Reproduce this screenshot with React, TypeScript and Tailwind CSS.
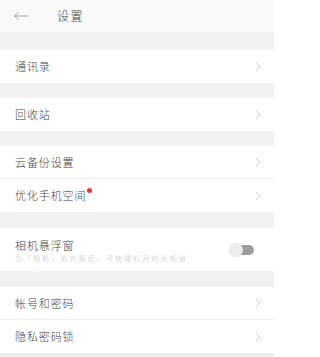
import React from "react";

const font = { fontFamily: '"Noto Sans CJK SC", "Noto Sans", sans-serif' };

function Chevron() {
  return (
    <svg width="6" height="10" viewBox="0 0 6 10" className="shrink-0">
      <path d="M1 1 L5 5 L1 9" fill="none" stroke="#c8c8c8" strokeWidth="0.9" />
    </svg>
  );
}

function Row({ label, dot, border }: { label: string; dot?: boolean; border?: boolean }) {
  return (
    <div className={`flex h-[33px] items-center justify-between bg-white pl-[15px] pr-[13px] ${border ? "border-b border-[#ededed]" : ""}`}>
      <div className="flex items-start">
        <span className="text-[11px] font-light tracking-[0.9px] text-[#444]">{label}</span>
        {dot && <span className="ml-[1px] mt-[1px] h-[5px] w-[5px] rounded-full bg-[#e53935]" />}
      </div>
      <Chevron />
    </div>
  );
}

function Gap({ h }: { h: string }) {
  return <div className={`${h} bg-[#f2f2f2]`} />;
}

export default function App() {
  return (
    <div className="w-[274px] h-[357px] overflow-hidden bg-[#f2f2f2]" style={font}>
      <div className="flex h-[32px] items-center bg-[#f9f9f9]">
        <svg width="16" height="10" viewBox="0 0 16 10" className="ml-[13px]">
          <path d="M15.5 5 H1.5 M5.5 1 L1.5 5 L5.5 9" fill="none" stroke="#999" strokeWidth="0.9" />
        </svg>
        <span className="ml-[28px] text-[12px] font-light tracking-[1.5px] text-[#444]">设置</span>
      </div>
      <Gap h="h-[18px]" />
      <Row label="通讯录" />
      <Gap h="h-[15px]" />
      <Row label="回收站" />
      <Gap h="h-[15px]" />
      <Row label="云备份设置" border />
      <Row label="优化手机空间" dot />
      <Gap h="h-[16px]" />
      <div className="flex h-[43px] items-center justify-between bg-white pl-[15px] pr-[20px]">
        <div className="flex flex-col">
          <span className="text-[11px] font-light leading-[16px] tracking-[0.9px] text-[#444]">相机悬浮窗</span>
          <span className="text-[7px] font-light leading-[10px] tracking-[2.1px] text-[#bdbdbd]">当「相机」拍完照后，可快捷打开时光相册</span>
        </div>
        <div className="relative h-[10px] w-[22px] rounded-full bg-[#9e9e9e]">
          <div className="absolute left-[-3px] top-[-2px] h-[14px] w-[14px] rounded-full bg-[#eeeeee] shadow-[0_0_2px_rgba(0,0,0,0.15)]" />
        </div>
      </div>
      <Gap h="h-[16px]" />
      <Row label="帐号和密码" border />
      <Row label="隐私密码锁" />
      <div className="h-[2px] bg-[#ececec]" />
    </div>
  );
}
